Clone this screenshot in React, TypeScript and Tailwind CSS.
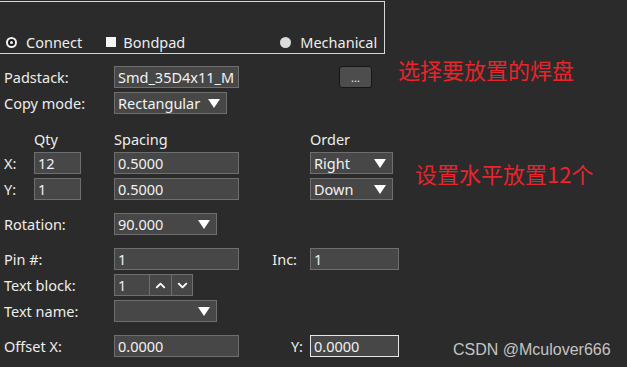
import { ChevronUp, ChevronDown } from "lucide-react";

const Arrow = () => (
  <svg width="12" height="9" viewBox="0 0 12 9" className="shrink-0">
    <path d="M0 0 H12 L6 9 Z" fill="#ffffff" />
  </svg>
);

const Field = ({ value, w, light }: { value: string; w: string; light?: boolean }) => (
  <div
    className={`${w} h-[22px] bg-[#474747] border ${
      light ? "border-[#e6e6e6]" : "border-[#6e6e6e]"
    } pl-[3px] flex items-center text-[14.5px] text-[#f2f2f2] leading-none`}
  >
    {value}
  </div>
);

const Select = ({ value, w }: { value: string; w: string }) => (
  <div className={`${w} h-[22px] bg-[#474747] border border-[#6e6e6e] pl-[3px] pr-[6px] flex items-center justify-between text-[14.5px] text-[#f2f2f2] leading-none`}>
    <span>{value}</span>
    <Arrow />
  </div>
);

export default function App() {
  return (
    <div
      className="w-[627px] h-[367px] bg-[#2b2b2b] relative overflow-hidden text-[#ededed]"
      style={{ fontFamily: '"Noto Sans", "Open Sans", sans-serif' }}
    >
      {/* type group */}
      <div className="mt-px w-[385px] h-[53px] border-t border-r border-b border-[#d6d6d6] flex items-end pb-[3px]">
        <div className="flex items-center h-[16px] w-full text-[14.5px] leading-none">
          <div className="ml-[6px] w-[11px] h-[11px] rounded-full bg-[#f0f0f0] flex items-center justify-center">
            <div className="w-[7px] h-[7px] rounded-full bg-[#1a1a1a] flex items-center justify-center">
              <div className="w-[3px] h-[3px] rounded-full bg-[#f0f0f0]" />
            </div>
          </div>
          <span className="ml-[9px]">Connect</span>
          <div className="ml-[24px] w-[10px] h-[10px] bg-[#f5f5f5]" />
          <span className="ml-[7px]">Bondpad</span>
          <div className="ml-[95px] w-[11px] h-[11px] rounded-full bg-[#dcdcdc]" />
          <span className="ml-[9px]">Mechanical</span>
        </div>
      </div>

      <div className="grid grid-cols-[34px_80px_196px_1fr] items-center text-[14.5px] leading-none">
        {/* Padstack */}
        <div className="col-span-2 pl-1 mt-[12px]">Padstack:</div>
        <div className="mt-[12px]">
          <Field value="Smd_35D4x11_M" w="w-[125px]" />
        </div>
        <div className="mt-[12px] pl-[29px]">
          <div className="w-[33px] h-[22px] rounded-[3px] bg-[#4d4d4d] border border-[#161616] flex items-end justify-center pb-[4px] text-[11px] leading-none text-[#f0f0f0]">
            ...
          </div>
        </div>

        {/* Copy mode */}
        <div className="col-span-2 pl-1 mt-[4px]">Copy mode:</div>
        <div className="mt-[4px] col-span-2">
          <Select value="Rectangular" w="w-[113px]" />
        </div>

        {/* headers */}
        <div className="mt-[14px] h-[22px]" />
        <div className="mt-[14px]">Qty</div>
        <div className="mt-[14px]">Spacing</div>
        <div className="mt-[14px]">Order</div>

        {/* X */}
        <div className="pl-1 mt-[2px]">X:</div>
        <div className="mt-[2px]">
          <Field value="12" w="w-[47px]" />
        </div>
        <div className="mt-[2px]">
          <Field value="0.5000" w="w-[125px]" />
        </div>
        <div className="mt-[2px]">
          <Select value="Right" w="w-[83px]" />
        </div>

        {/* Y */}
        <div className="pl-1 mt-[4px]">Y:</div>
        <div className="mt-[4px]">
          <Field value="1" w="w-[47px]" />
        </div>
        <div className="mt-[4px]">
          <Field value="0.5000" w="w-[125px]" />
        </div>
        <div className="mt-[4px]">
          <Select value="Down" w="w-[83px]" />
        </div>

        {/* Rotation */}
        <div className="mt-[13px] col-span-2 pl-1">Rotation:</div>
        <div className="mt-[13px] col-span-2">
          <Select value="90.000" w="w-[103px]" />
        </div>

        {/* Pin */}
        <div className="mt-[13px] col-span-2 pl-1">Pin #:</div>
        <div className="mt-[13px] flex items-center justify-between pr-[13px]">
          <Field value="1" w="w-[125px]" />
          <span>Inc:</span>
        </div>
        <div className="mt-[13px]">
          <Field value="1" w="w-[89px]" />
        </div>

        {/* Text block */}
        <div className="col-span-2 pl-1 mt-[4px]">Text block:</div>
        <div className="mt-[4px] col-span-2">
          <div className="w-[79px] h-[22px] bg-[#474747] border border-[#6e6e6e] flex">
            <div className="w-[34px] pl-[3px] flex items-center">1</div>
            <div className="w-[22px] border-l border-[#6e6e6e] flex items-center justify-center">
              <ChevronUp size={15} strokeWidth={3} color="#ffffff" />
            </div>
            <div className="flex-1 border-l border-[#6e6e6e] flex items-center justify-center">
              <ChevronDown size={15} strokeWidth={3} color="#ffffff" />
            </div>
          </div>
        </div>

        {/* Text name */}
        <div className="col-span-2 pl-1 mt-[4px]">Text name:</div>
        <div className="mt-[4px] col-span-2">
          <Select value="" w="w-[103px]" />
        </div>

        {/* Offset */}
        <div className="col-span-2 pl-1 mt-[13px]">Offset X:</div>
        <div className="mt-[13px] flex items-center justify-between pr-[7px]">
          <Field value="0.0000" w="w-[125px]" />
          <span>Y:</span>
        </div>
        <div className="mt-[13px]">
          <Field value="0.0000" w="w-[89px]" light />
        </div>
      </div>

      {/* annotations */}
      <div
        className="absolute left-[398px] top-[58px] text-[22px] leading-none text-[#e8242c]"
        style={{ fontFamily: '"Noto Sans CJK SC", sans-serif' }}
      >
        选择要放置的焊盘
      </div>
      <div
        className="absolute left-[415px] top-[162px] text-[22px] leading-none text-[#e8242c]"
        style={{ fontFamily: '"Noto Sans CJK SC", sans-serif' }}
      >
        设置水平放置12个
      </div>
      <div
        className="absolute left-[453px] top-[342px] text-[16px] leading-none text-[#c4c4c4]"
        style={{ fontFamily: '"Liberation Sans", Arial, sans-serif' }}
      >
        CSDN @Mculover666
      </div>
    </div>
  );
}
